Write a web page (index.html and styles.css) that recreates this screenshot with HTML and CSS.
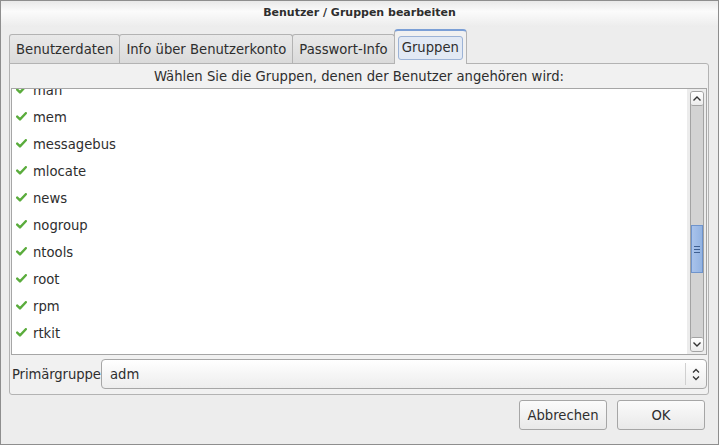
FILE: index.html
```html
<!DOCTYPE html>
<html lang="de">
<head>
  <meta charset="UTF-8" />
  <title>Benutzer / Gruppen bearbeiten</title>
  <link rel="stylesheet" href="styles.css">
</head>
<body>
  <div class="window">
    <div class="titlebar">Benutzer / Gruppen bearbeiten</div>

    <div class="content">
      <div class="tabs">
        <div class="tab">Benutzerdaten</div>
        <div class="tab">Info über Benutzerkonto</div>
        <div class="tab">Passwort-Info</div>
        <div class="tab active"><span class="focus">Gruppen</span></div>
      </div>

      <div class="panel">
        <div class="hint">Wählen Sie die Gruppen, denen der Benutzer angehören wird:</div>

        <div class="list-box">
          <div class="list-view">
            <ul class="groups">
              <li><svg class="check" width="11" height="9" viewBox="0 0 11 9"><path d="M1.2 4.6 L4 7.4 L9.8 1.2" fill="none" stroke="#5aac3c" stroke-width="2.4" stroke-linecap="round" stroke-linejoin="round"/></svg>man</li>
              <li><svg class="check" width="11" height="9" viewBox="0 0 11 9"><path d="M1.2 4.6 L4 7.4 L9.8 1.2" fill="none" stroke="#5aac3c" stroke-width="2.4" stroke-linecap="round" stroke-linejoin="round"/></svg>mem</li>
              <li><svg class="check" width="11" height="9" viewBox="0 0 11 9"><path d="M1.2 4.6 L4 7.4 L9.8 1.2" fill="none" stroke="#5aac3c" stroke-width="2.4" stroke-linecap="round" stroke-linejoin="round"/></svg>messagebus</li>
              <li><svg class="check" width="11" height="9" viewBox="0 0 11 9"><path d="M1.2 4.6 L4 7.4 L9.8 1.2" fill="none" stroke="#5aac3c" stroke-width="2.4" stroke-linecap="round" stroke-linejoin="round"/></svg>mlocate</li>
              <li><svg class="check" width="11" height="9" viewBox="0 0 11 9"><path d="M1.2 4.6 L4 7.4 L9.8 1.2" fill="none" stroke="#5aac3c" stroke-width="2.4" stroke-linecap="round" stroke-linejoin="round"/></svg>news</li>
              <li><svg class="check" width="11" height="9" viewBox="0 0 11 9"><path d="M1.2 4.6 L4 7.4 L9.8 1.2" fill="none" stroke="#5aac3c" stroke-width="2.4" stroke-linecap="round" stroke-linejoin="round"/></svg>nogroup</li>
              <li><svg class="check" width="11" height="9" viewBox="0 0 11 9"><path d="M1.2 4.6 L4 7.4 L9.8 1.2" fill="none" stroke="#5aac3c" stroke-width="2.4" stroke-linecap="round" stroke-linejoin="round"/></svg>ntools</li>
              <li><svg class="check" width="11" height="9" viewBox="0 0 11 9"><path d="M1.2 4.6 L4 7.4 L9.8 1.2" fill="none" stroke="#5aac3c" stroke-width="2.4" stroke-linecap="round" stroke-linejoin="round"/></svg>root</li>
              <li><svg class="check" width="11" height="9" viewBox="0 0 11 9"><path d="M1.2 4.6 L4 7.4 L9.8 1.2" fill="none" stroke="#5aac3c" stroke-width="2.4" stroke-linecap="round" stroke-linejoin="round"/></svg>rpm</li>
              <li><svg class="check" width="11" height="9" viewBox="0 0 11 9"><path d="M1.2 4.6 L4 7.4 L9.8 1.2" fill="none" stroke="#5aac3c" stroke-width="2.4" stroke-linecap="round" stroke-linejoin="round"/></svg>rtkit</li>
            </ul>
          </div>
          <div class="scrollbar">
            <div class="trough">
              <div class="arrow">
                <svg width="8" height="5" viewBox="0 0 8 5"><path d="M0.5 4.5 L4 1 L7.5 4.5" fill="none" stroke="#333" stroke-width="1.4"/></svg>
              </div>
              <div class="track">
                <div class="thumb"><span></span><span></span><span></span></div>
              </div>
              <div class="arrow">
                <svg width="8" height="5" viewBox="0 0 8 5"><path d="M0.5 0.5 L4 4 L7.5 0.5" fill="none" stroke="#333" stroke-width="1.4"/></svg>
              </div>
            </div>
          </div>
        </div>

        <div class="primary-row">
          <label for="primary">Primärgruppe</label>
          <div class="combo" id="primary">
            <span class="combo-value">adm</span>
            <span class="combo-arrows">
              <svg width="8" height="13" viewBox="0 0 8 13"><path d="M1 4.5 L4 1.5 L7 4.5 M1 8.5 L4 11.5 L7 8.5" fill="none" stroke="#333" stroke-width="1.3"/></svg>
            </span>
          </div>
        </div>
      </div>

      <div class="actions">
        <button class="btn">Abbrechen</button>
        <button class="btn">OK</button>
      </div>
    </div>
  </div>
</body>
</html>
```

FILE: styles.css
```css
body {
  margin: 0;
  font-family: "DejaVu Sans", sans-serif;
  font-size: 13.2px;
  color: #2e2e2e;
  background: #ededed;
}
.window {
  width: 719px;
  height: 445px;
  box-sizing: border-box;
  border: 1px solid #8e8e8e;
  background: #ededed;
  display: flex;
  flex-direction: column;
}
.titlebar {
  height: 26px;
  line-height: 23px;
  text-align: center;
  font-size: 11px;
  font-weight: bold;
  color: #2e2e2e;
  background: linear-gradient(#e9e9e9, #fbfbfb 40%, #ececec);
}
.content {
  flex: 1;
  padding: 3px 0 0 8px;
  display: flex;
  flex-direction: column;
}
.tabs {
  display: flex;
  align-items: flex-end;
  height: 34px;
  margin-bottom: -1px;
}
.tab {
  height: 29px;
  line-height: 29px;
  padding: 0 6px;
  border: 1px solid #b3b3b3;
  border-bottom: none;
  border-radius: 3px 3px 0 0;
  background: linear-gradient(#e9e9e9, #dadada);
  color: #2e2e2e;
}
.tab + .tab {
  margin-left: -1px;
}
.tab.active {
  position: relative;
  height: 33px;
  line-height: 33px;
  padding: 0 3px;
  background: #f1f1f1;
  border-color: #b3b3b3;
  border-top: 2px solid #7b9fd6;
  border-radius: 4px 4px 0 0;
  z-index: 1;
}
.focus {
  display: inline-block;
  line-height: 20px;
  padding: 1px 3px;
  border: 1px solid #9cb3d6;
  border-radius: 3px;
  background: #e2e9f4;
}
.panel {
  width: 700px;
  height: 332px;
  box-sizing: border-box;
  border: 1px solid #b3b3b3;
  border-radius: 0 3px 3px 3px;
  background: #f1f1f1;
  padding: 0 1px;
  display: flex;
  flex-direction: column;
}
.hint {
  height: 24px;
  line-height: 26px;
  text-align: center;
}
.list-box {
  height: 267px;
  box-sizing: border-box;
  border: 1px solid #a6a6a6;
  background: #fff;
  display: flex;
}
.list-view {
  flex: 1;
  overflow: hidden;
}
.groups {
  list-style: none;
  margin: -12px 0 0 0;
  padding: 0;
}
.groups li {
  height: 27px;
  line-height: 27px;
  padding-left: 3px;
  display: flex;
  align-items: center;
}
.check {
  margin: -3px 6px 0 1px;
}
.scrollbar {
  width: 19px;
  background: #ececec;
  padding: 2px 0 2px 3px;
  box-sizing: border-box;
}
.trough {
  width: 14px;
  height: 100%;
  box-sizing: border-box;
  border: 1px solid #a3a3a3;
  border-radius: 3px;
  background: #d3d3d3;
  display: flex;
  flex-direction: column;
}
.arrow {
  height: 13px;
  background: linear-gradient(#ffffff, #ececec);
  border-radius: 2px;
  display: flex;
  align-items: center;
  justify-content: center;
}
.arrow:first-child {
  border-bottom: 1px solid #a3a3a3;
}
.arrow:last-child {
  border-top: 1px solid #a3a3a3;
}
.track {
  flex: 1;
  padding-top: 119px;
}
.thumb {
  height: 48px;
  box-sizing: border-box;
  border: 1px solid #6f94cc;
  background: linear-gradient(to right, #a9c3eb, #93b3e2);
  display: flex;
  flex-direction: column;
  align-items: center;
  justify-content: center;
  gap: 2px;
}
.thumb span {
  width: 6px;
  height: 1px;
  background: #3f5f91;
}
.primary-row {
  display: flex;
  align-items: center;
  height: 38px;
  padding-left: 1px;
}
.primary-row label {
  width: 89px;
  letter-spacing: -0.1px;
}
.combo {
  flex: 1;
  height: 30px;
  box-sizing: border-box;
  border: 1px solid #a6a6a6;
  border-radius: 4px;
  background: linear-gradient(#ffffff, #ededed);
  display: flex;
  align-items: center;
}
.combo-value {
  flex: 1;
  padding-left: 8px;
}
.combo-arrows {
  width: 20px;
  height: 22px;
  border-left: 1px solid #d0d0d0;
  display: flex;
  align-items: center;
  justify-content: center;
}
.actions {
  display: flex;
  justify-content: flex-end;
  gap: 10px;
  padding: 5px 13px 0 0;
}
.btn {
  width: 88px;
  height: 30px;
  border: 1px solid #a6a6a6;
  border-radius: 3px;
  background: linear-gradient(#fbfbfb, #e9e9e9);
  font-family: "DejaVu Sans", sans-serif;
  font-size: 13.2px;
  color: #2e2e2e;
}
```
